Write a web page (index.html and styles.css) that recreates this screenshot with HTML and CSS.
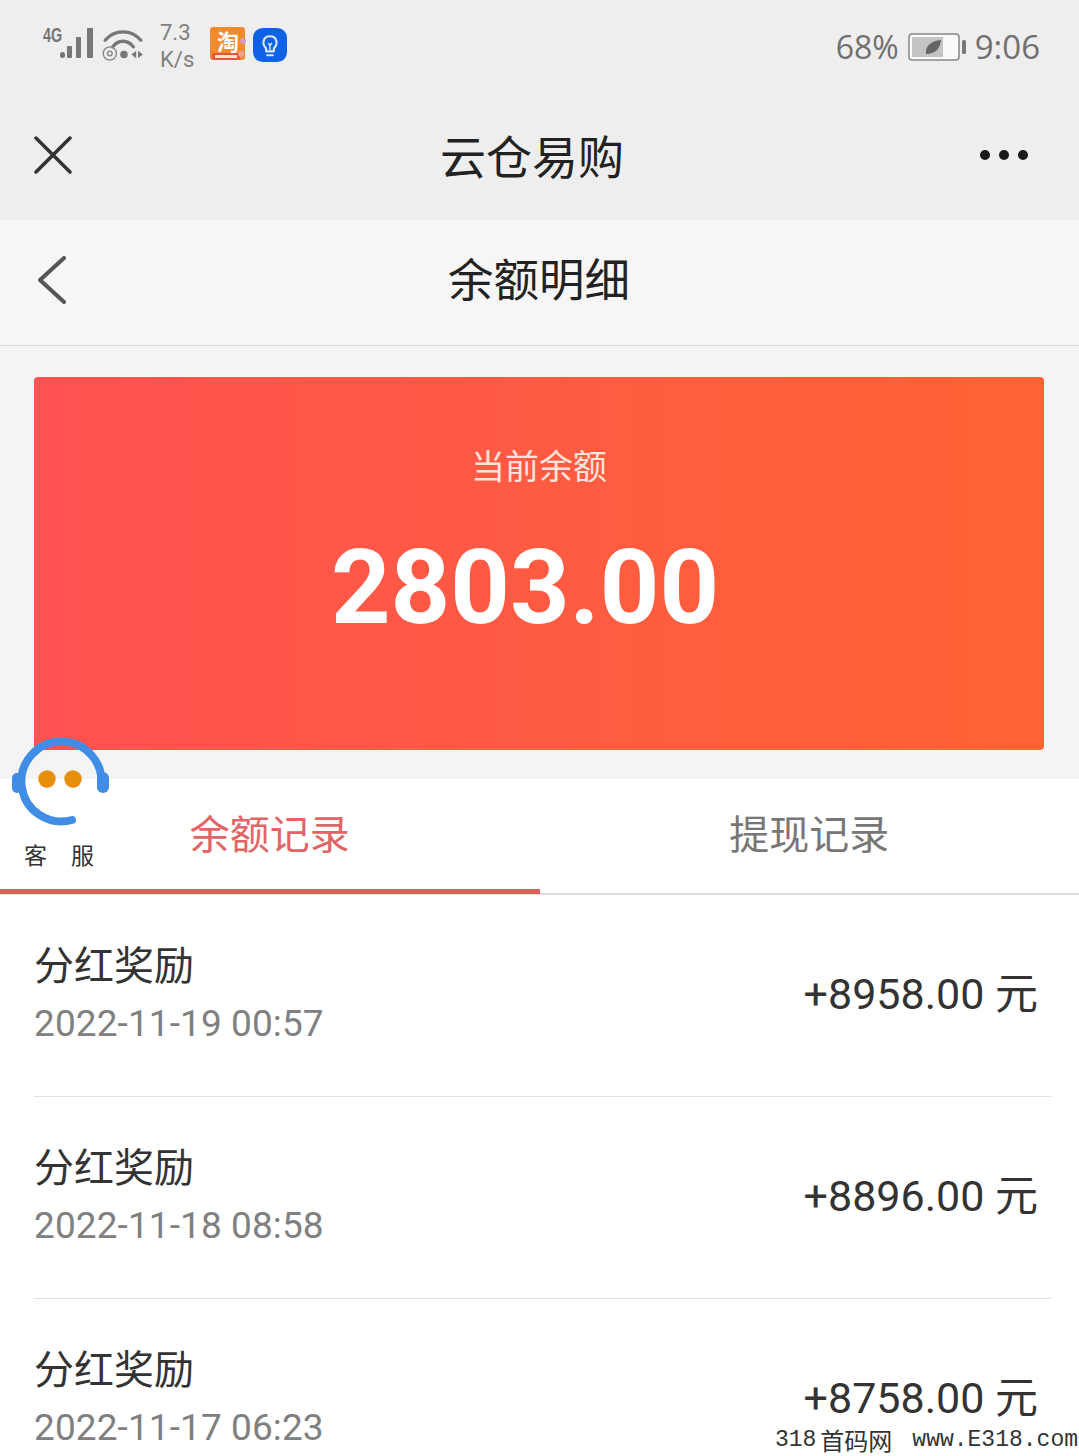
FILE: index.html
```html
<!DOCTYPE html>
<html lang="zh-CN">
  <head>
    <meta charset="UTF-8" />
    <title>余额明细</title>
    <link rel="stylesheet" href="styles.css">
  </head>
  <body>
    <div class="page">
      <div class="status-bar">
        <div class="status-left">
          <svg class="signal" width="52" height="36" viewBox="0 0 52 36">
            <text transform="translate(1 15) scale(0.72 1)" class="net-text">4G</text>
            <rect x="18" y="25" width="5" height="6" rx="2.5" fill="#777"/>
            <rect x="25" y="19" width="5" height="12" rx="1" fill="#777"/>
            <rect x="34" y="10" width="5" height="21" rx="1" fill="#777"/>
            <rect x="45" y="1" width="6" height="30" rx="1" fill="#777"/>
          </svg>
          <svg class="wifi" width="42" height="32" viewBox="0 0 44 34">
            <path d="M3 12 C13 0 31 0 41 12" fill="none" stroke="#777" stroke-width="3.5" stroke-linecap="round"/>
            <path d="M11 19 C17 11 27 11 33 19" fill="none" stroke="#777" stroke-width="3.5" stroke-linecap="round"/>
            <circle cx="8" cy="26" r="7" fill="none" stroke="#888" stroke-width="1.5"/>
            <circle cx="8" cy="26" r="2.5" fill="none" stroke="#888" stroke-width="1.5"/>
            <circle cx="23" cy="27" r="4" fill="#777"/>
            <path d="M36 23 L31 27 L36 31 Z M38 23 L43 27 L38 31 Z" fill="#777"/>
          </svg>
          <div class="speed"><span>7.3</span><span>K/s</span></div>
          <svg class="app-icon" width="36" height="36" viewBox="0 0 36 36">
            <rect width="35" height="33" rx="3" fill="#f08a2c"/>
            <rect x="2" y="26" width="28" height="7" rx="2" fill="#e8533a"/>
            <rect x="5" y="28" width="22" height="3" fill="#fbe3c8"/>
            <text x="7" y="23" class="tao-text">淘</text>
            <circle cx="33" cy="14" r="3" fill="#d99ac0"/>
            <circle cx="31" cy="27" r="3" fill="#f0a0a0"/>
          </svg>
          <svg class="app-icon" width="34" height="34" viewBox="0 0 35 35">
            <rect width="35" height="35" rx="10" fill="#0f62e6"/>
            <path d="M13.5 21 C9 17 10 8.500 17.500 8.500 C25 8.500 26 17 21.500 21 V24 H13.500 Z" fill="none" stroke="#d8e6fb" stroke-width="2.2" stroke-linejoin="round"/>
            <path d="M14.500 28 H20.500" stroke="#d8e6fb" stroke-width="2.200" stroke-linecap="round"/>
            <path d="M17.500 23 V18 L15.500 15.500 M17.500 18 L19.500 15.500" stroke="#d8e6fb" stroke-width="1.500" fill="none"/>
          </svg>
        </div>
        <div class="status-right">
          <span>68%</span>
          <svg class="battery" width="58" height="28" viewBox="0 0 58 28">
            <rect x="1" y="1" width="50" height="26" rx="3" fill="#fafafa" stroke="#888" stroke-width="1.500"/>
            <rect x="4" y="4" width="31" height="20" fill="#c4c4c4"/>
            <path d="M18 21 C17 12 24 8 33 7 C32 16 27 21 18 21 Z" fill="#666"/>
            <rect x="54" y="7" width="4" height="14" rx="1.500" fill="#777"/>
          </svg>
          <span class="clock">9:06</span>
        </div>
      </div>

      <div class="nav-bar">
        <svg class="nav-icon" width="38" height="38" viewBox="0 0 38 38">
          <path d="M2 2 L36 36 M36 2 L2 36" stroke="#333" stroke-width="3.500" stroke-linecap="round"/>
        </svg>
        <div class="nav-title">云仓易购</div>
        <div class="more"><i></i><i></i><i></i></div>
      </div>

      <div class="sub-header">
        <svg class="back" width="30" height="48" viewBox="0 0 30 48">
          <path d="M27 2 L3 24 L27 46" fill="none" stroke="#555" stroke-width="4" stroke-linecap="round" stroke-linejoin="round"/>
        </svg>
        <div class="sub-title">余额明细</div>
      </div>

      <div class="balance-wrap">
        <div class="balance-card">
          <div class="balance-label">当前余额</div>
          <div class="balance-value">2803.00</div>
        </div>
      </div>

      <div class="tabs">
        <div class="tab active">余额记录</div>
        <div class="tab">提现记录</div>
      </div>

      <div class="list">
        <div class="row">
          <div class="row-info">
            <div class="row-title">分红奖励</div>
            <div class="row-date">2022-11-19 00:57</div>
          </div>
          <div class="row-amount">+8958.00 元</div>
        </div>
        <div class="row">
          <div class="row-info">
            <div class="row-title">分红奖励</div>
            <div class="row-date">2022-11-18 08:58</div>
          </div>
          <div class="row-amount">+8896.00 元</div>
        </div>
        <div class="row">
          <div class="row-info">
            <div class="row-title">分红奖励</div>
            <div class="row-date">2022-11-17 06:23</div>
          </div>
          <div class="row-amount">+8758.00 元</div>
        </div>
      </div>

      <div class="service">
        <svg width="100" height="92" viewBox="0 0 100 92">
          <path d="M61 83 A40 40 0 1 1 90 50" fill="none" stroke="#3f8de4" stroke-width="8" stroke-linecap="round"/>
          <rect x="1" y="36" width="10" height="20" rx="5" fill="#3f8de4"/>
          <rect x="86" y="35" width="12" height="21" rx="6" fill="#3f8de4"/>
          <circle cx="36" cy="42" r="8.700" fill="#e78f0d"/>
          <circle cx="62" cy="42" r="8.700" fill="#e78f0d"/>
        </svg>
        <div class="service-label"><span>客</span><span>服</span></div>
      </div>

      <div class="watermark"><span>318</span><span class="watermark-cjk">首码网</span><span>www.E318.com</span></div>
    </div>
  </body>
</html>
```

FILE: styles.css
```css
body {
  margin: 0;
  font-family: Roboto, "Noto Sans CJK SC", sans-serif;
  background-color: #fff;
}
.page {
  position: relative;
  width: 1079px;
  height: 1456px;
  overflow: hidden;
}
.status-bar {
  height: 90px;
  background-color: #eeeeee;
  display: flex;
  justify-content: space-between;
  align-items: center;
  padding: 0 39px 20px 42px;
}
.status-left {
  display: flex;
  align-items: center;
}
.status-left svg {
  overflow: visible;
}
.net-text {
  font-family: "Liberation Sans", sans-serif;
  font-size: 20px;
  font-weight: bold;
  fill: #777;
}
.tao-text {
  font-family: "Noto Sans CJK SC", sans-serif;
  font-size: 22px;
  font-weight: bold;
  fill: #fff;
}
.wifi {
  margin-left: 8px;
}
.speed {
  display: flex;
  flex-direction: column;
  margin-left: 16px;
  margin-right: 16px;
  padding-top: 1px;
  font-size: 22px;
  line-height: 27px;
  color: #808080;
}
.app-icon {
  margin-right: 7px;
}
.status-right {
  display: flex;
  align-items: center;
  gap: 9px;
  padding-top: 3px;
  font-family: "Open Sans", sans-serif;
  font-size: 32px;
  color: #707070;
}
.clock {
  font-size: 33px;
}
.nav-bar {
  height: 110px;
  background-color: #eeeeee;
  display: flex;
  align-items: center;
  justify-content: space-between;
  padding: 0 51px 20px 34px;
  box-sizing: border-box;
}
.nav-title {
  font-size: 46px;
  margin-left: 12px;
  margin-bottom: 2px;
  color: #222;
}
.more {
  display: flex;
  gap: 9px;
}
.more i {
  width: 10px;
  height: 10px;
  border-radius: 50%;
  background-color: #1a1a1a;
}
.sub-header {
  height: 119px;
  background-color: #f6f6f6;
  border-bottom: 1px solid #dddddd;
  display: flex;
  align-items: center;
  padding-left: 37px;
  padding-bottom: 6px;
  gap: 381px;
}
.sub-title {
  font-size: 45.500px;
  margin-bottom: 6px;
  color: #222;
}
.balance-wrap {
  background-color: #f4f4f4;
  padding: 31px 35px 29px 34px;
}
.balance-card {
  height: 373px;
  border-radius: 4px;
  background: linear-gradient(90deg, #ff5252, #ff6333);
  color: #fff;
  text-align: center;
}
.balance-label {
  padding-top: 67px;
  font-size: 34px;
  line-height: 46px;
  color: #fde3dc;
}
.balance-value {
  margin-top: 43px;
  font-size: 104px;
  font-weight: bold;
  line-height: 110px;
  padding-right: 28px;
}
.tabs {
  display: flex;
  height: 116px;
  background-color: #fff;
  border-bottom: 2px solid #dddddd;
  box-sizing: border-box;
}
.tab {
  flex: 1;
  display: flex;
  align-items: center;
  justify-content: center;
  padding-bottom: 9px;
  font-size: 40px;
  color: #777;
}
.tab.active {
  color: #e06666;
  padding-bottom: 4px;
  border-bottom: 5px solid #e85a5a;
  margin-bottom: -1px;
}
.list {
  padding-left: 34px;
  padding-right: 28px;
}
.row {
  height: 202px;
  box-sizing: border-box;
  border-bottom: 1px solid #e2e2e2;
  display: flex;
  justify-content: space-between;
  padding-top: 44px;
  padding-right: 13px;
}
.row-title {
  font-size: 40px;
  line-height: 56px;
  color: #333;
}
.row-date {
  font-size: 37px;
  line-height: 44px;
  margin-top: 7px;
  letter-spacing: 0.100px;
  color: #808080;
}
.row-amount {
  font-size: 43px;
  line-height: 56px;
  margin-top: 27px;
  color: #333;
}
.service {
  position: absolute;
  left: 11px;
  top: 737px;
  width: 100px;
}
.service svg {
  display: block;
}
.service-label {
  display: flex;
  gap: 24px;
  padding-left: 13px;
  margin-top: 12px;
  font-size: 23px;
  line-height: 32px;
  color: #333;
}
.watermark {
  position: absolute;
  right: 1px;
  bottom: 0;
  display: flex;
  align-items: center;
  height: 28px;
  font-family: "Liberation Mono", monospace;
  font-size: 23px;
  line-height: 24px;
  background-color: #fff;
  color: #333;
  padding: 0 0 2px 2px;
  white-space: nowrap;
}
.watermark-cjk {
  font-family: "Noto Sans CJK SC", sans-serif;
  font-size: 24px;
  margin: 0 20px 0 4px;
}
```
